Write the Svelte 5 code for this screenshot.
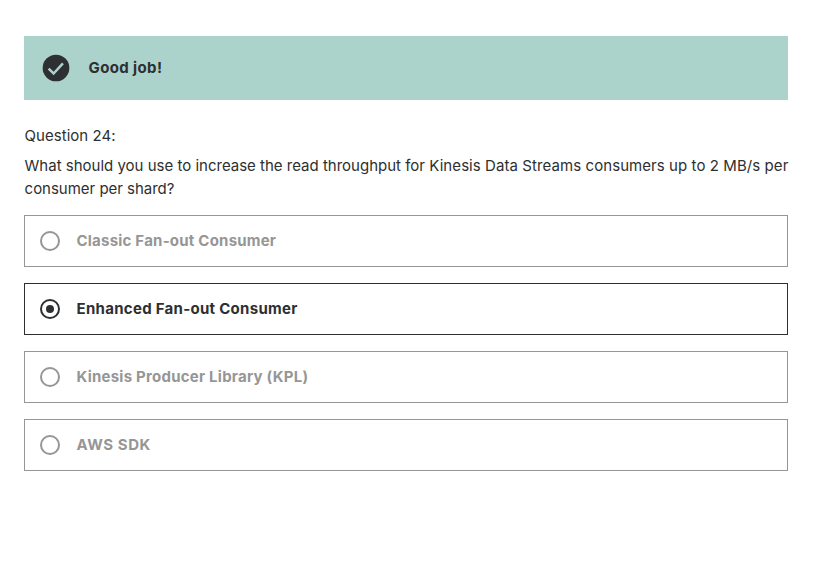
<script>
  const options = [
    { text: 'Classic Fan-out Consumer', tracking: 0.22 },
    { text: 'Enhanced Fan-out Consumer', tracking: 0.29 },
    { text: 'Kinesis Producer Library (KPL)', tracking: 0.24 },
    { text: 'AWS SDK', tracking: 0.58 }
  ];
  let selected = $state(1);
</script>

<main>
  <div class="banner">
    <svg width="32" height="32" viewBox="0 0 24 24" aria-hidden="true">
      <circle cx="12" cy="12" r="10" fill="#2d2f31" />
      <path d="M6.5 12.4l3.7 3.7 7-7.6" fill="none" stroke="#acd2cc" stroke-width="1.85" />
    </svg>
    <strong>Good job!</strong>
  </div>
  <section>
    <div class="number">Question 24:</div>
    <p><span class="lead">What should you use to increase the read throughput for</span> Kinesis Data Streams consumers up to 2 MB/s per <span class="rest">consumer per shard?</span></p>
    <div class="options">
      {#each options as option, i}
        <button class:selected={selected === i} onclick={() => (selected = i)}>
          <span class="radio"></span>
          <span class="label" style="letter-spacing: {option.tracking}px">{option.text}</span>
        </button>
      {/each}
    </div>
  </section>
</main>

<style>
  :global(body) { background: #fff; }
  main { padding: 36px 29px 0 24px; font-family: Inter, sans-serif; font-size: 15px; color: #2d2f31; }
  .banner { height: 64px; background: #acd2cc; display: flex; align-items: center; padding-left: 16px; gap: 16.5px; }
  strong { font-weight: 700; letter-spacing: 0.38px; padding-bottom: 2px; }
  .number { margin-top: 24px; padding-left: 0.6px; line-height: 23px; letter-spacing: 0.03px; }
  p { margin: 7px 0 15px; padding-left: 0.6px; line-height: 23px; white-space: nowrap; letter-spacing: 0.075px; }
  .lead { letter-spacing: 0; }
  .rest { display: block; letter-spacing: -0.02px; }
  .options { display: flex; flex-direction: column; gap: 16px; }
  button { height: 52px; box-sizing: border-box; display: flex; align-items: center; gap: 16.5px; padding: 0 15px; border: 1px solid #969696; border-radius: 0; background: #fff; color: #969696; font: 700 15px Inter, sans-serif; }
  .label { padding-bottom: 2px; }
  .radio { width: 20px; height: 20px; box-sizing: border-box; border: 2px solid #969696; border-radius: 50%; display: flex; align-items: center; justify-content: center; }
  .selected { border-color: #2d2f31; color: #2d2f31; }
  .selected .radio { border-color: #2d2f31; }
  .selected .radio::after { content: ''; width: 8px; height: 8px; border-radius: 50%; background: #2d2f31; }
</style>
